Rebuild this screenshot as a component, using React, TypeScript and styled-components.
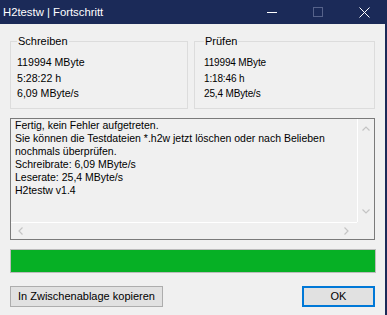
import React from 'react';
import styled, { createGlobalStyle } from 'styled-components';

const GlobalStyle = createGlobalStyle`
  html, body {
    margin: 0;
    padding: 0;
    background: #f0f0f0;
  }
  body {
    font-family: "Liberation Sans", Arial, sans-serif;
    color: #000;
  }
`;

const NAVY = '#1b2a58';

const Window = styled.div`
  width: 387px;
  height: 315px;
  display: flex;
  flex-direction: column;
  background: ${NAVY};
  overflow: hidden;
`;

const TitleBar = styled.div`
  height: 24px;
  flex-shrink: 0;
  display: flex;
  align-items: center;
`;

const Title = styled.div`
  flex: 1;
  padding-left: 3px;
  color: #fff;
  font-size: 11.3px;
  line-height: 24px;
`;

const Control = styled.div<{ $disabled?: boolean }>`
  width: 46px;
  height: 24px;
  display: flex;
  align-items: center;
  justify-content: center;
  color: ${({ $disabled }) => ($disabled ? '#56628a' : '#fff')};
`;

const Body = styled.div`
  flex: 1;
  margin-right: 2px;
  background: #f0f0f0;
  padding: 10px 10px 0 10px;
  display: flex;
  flex-direction: column;
`;

const Groups = styled.div`
  display: flex;
  gap: 6px;
`;

const Group = styled.fieldset<{ $inset: number }>`
  flex: 1;
  min-width: 0;
  margin: 0;
  padding: 6px 6px 6px ${({ $inset }) => $inset}px;
  border: 1px solid #dcdcdc;
`;

const Legend = styled.legend`
  padding: 0 1px;
  font-size: 11px;
  line-height: 15px;
`;

const Value = styled.div<{ $compact?: boolean }>`
  font-size: ${({ $compact }) => ($compact ? '10px' : '10.6px')};
  letter-spacing: ${({ $compact }) => ($compact ? '-0.15px' : '0')};
  line-height: 15.5px;
  white-space: nowrap;
`;

const LogBox = styled.div`
  margin-top: 9px;
  height: 122px;
  box-sizing: border-box;
  border: 1px solid #7a7a7a;
  display: grid;
  grid-template-columns: 1fr 17px;
  grid-template-rows: 1fr 17px;
`;

const LogText = styled.div`
  padding: 0 4px;
  font-size: 10.5px;
  line-height: 13px;
  white-space: pre;
  overflow: hidden;
`;

const VScroll = styled.div`
  border-left: 1px solid #fff;
  display: flex;
  flex-direction: column;
  justify-content: space-between;
  align-items: center;
  padding: 6px 0 7px;
`;

const HScroll = styled.div`
  border-top: 1px solid #fff;
  display: flex;
  justify-content: space-between;
  align-items: center;
  padding: 0 7px 0 6px;
`;

const Progress = styled.div`
  margin-top: 9px;
  margin-right: -1px;
  height: 24px;
  box-sizing: border-box;
  border: 1px solid #bcbcbc;
  background: #06b025;
`;

const Buttons = styled.div`
  margin-top: 13px;
  display: flex;
  justify-content: space-between;
`;

const Button = styled.button<{ $default?: boolean; $width: number }>`
  width: ${({ $width }) => $width}px;
  height: 21px;
  box-sizing: border-box;
  margin: 0;
  padding: 0;
  background: #e1e1e1;
  border: ${({ $default }) => ($default ? '2px solid #0078d7' : '1px solid #adadad')};
  font-family: "Liberation Sans", Arial, sans-serif;
  font-size: 11px;
  color: #000;
`;

type Dir = 'up' | 'down' | 'left' | 'right';

const rotation: Record<Dir, number> = { up: 0, right: 90, down: 180, left: 270 };

const Chevron = ({ dir }: { dir: Dir }) => (
  <svg width="8" height="8" viewBox="0 0 8 8" style={{ transform: `rotate(${rotation[dir]}deg)` }}>
    <path d="M0.5 5.5 L4 2 L7.5 5.5" fill="none" stroke="#c4c4c4" strokeWidth="1.2" />
  </svg>
);

const log = [
  'Fertig, kein Fehler aufgetreten.',
  'Sie können die Testdateien *.h2w jetzt löschen oder nach Belieben',
  'nochmals überprüfen.',
  'Schreibrate: 6,09 MByte/s',
  'Leserate: 25,4 MByte/s',
  'H2testw v1.4',
];

export default function App() {
  return (
    <>
      <GlobalStyle />
      <Window>
        <TitleBar>
          <Title>H2testw | Fortschritt</Title>
          <Control>
            <svg width="10" height="10" viewBox="0 0 10 10">
              <path d="M0 5.5 H10" stroke="currentColor" strokeWidth="1" />
            </svg>
          </Control>
          <Control $disabled>
            <svg width="10" height="10" viewBox="0 0 10 10">
              <rect x="0.5" y="0.5" width="9" height="9" fill="none" stroke="currentColor" strokeWidth="1" />
            </svg>
          </Control>
          <Control>
            <svg width="11" height="11" viewBox="0 0 11 11">
              <path d="M0.5 0.5 L10.5 10.5 M10.5 0.5 L0.5 10.5" stroke="currentColor" strokeWidth="1" />
            </svg>
          </Control>
        </TitleBar>
        <Body>
          <Groups>
            <Group $inset={6}>
              <Legend>Schreiben</Legend>
              <Value>119994 MByte</Value>
              <Value>5:28:22 h</Value>
              <Value>6,09 MByte/s</Value>
            </Group>
            <Group $inset={9}>
              <Legend>Prüfen</Legend>
              <Value $compact>119994 MByte</Value>
              <Value $compact>1:18:46 h</Value>
              <Value $compact>25,4 MByte/s</Value>
            </Group>
          </Groups>
          <LogBox>
            <LogText>{log.join('\n')}</LogText>
            <VScroll>
              <Chevron dir="up" />
              <Chevron dir="down" />
            </VScroll>
            <HScroll>
              <Chevron dir="left" />
              <Chevron dir="right" />
            </HScroll>
            <div />
          </LogBox>
          <Progress />
          <Buttons>
            <Button $width={153}>In Zwischenablage kopieren</Button>
            <Button $width={73} $default>OK</Button>
          </Buttons>
        </Body>
      </Window>
    </>
  );
}
